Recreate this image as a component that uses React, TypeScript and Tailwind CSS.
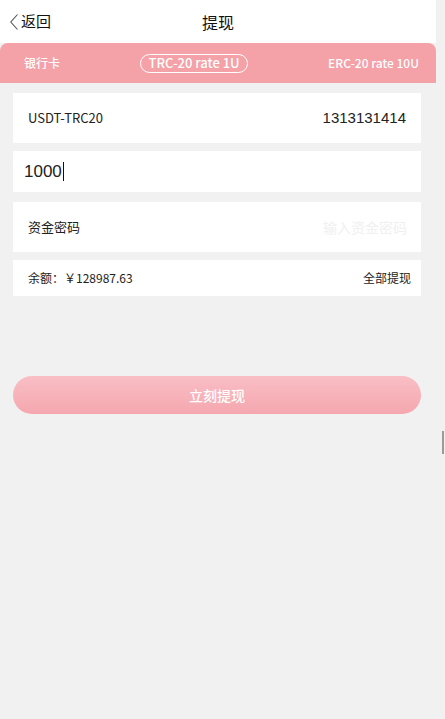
import { useState } from 'react';

const font = "font-['Noto_Sans_CJK_SC','Noto_Sans',sans-serif]";

export default function App() {
  const [tab, setTab] = useState(1);
  const tabs = ['银行卡', 'TRC-20 rate 1U', 'ERC-20 rate 10U'];

  return (
    <div className={`relative min-h-[719px] w-[445px] bg-[#f1f1f2] ${font}`}>
      <div className="w-[436px]">
        {/* header */}
        <div className="relative flex h-[43px] items-center bg-white">
          <button className="flex items-center pl-[9px] text-[15px] text-[#111]">
            <svg width="10" height="18" viewBox="0 0 10 18" fill="none" className="mr-[2px]">
              <path d="M8.5 1.5 1.8 9l6.7 7.5" stroke="#555" strokeWidth="1.1" />
            </svg>
            返回
          </button>
          <h1 className="absolute left-1/2 -translate-x-1/2 text-[16px] text-[#111]">提现</h1>
        </div>

        {/* tabs */}
        <div className="flex h-[40px] items-center justify-between rounded-t-[8px] bg-[#f4a1a8] pl-[17px] pr-[10px] text-[12px] font-medium text-white">
          {tabs.map((t, i) => (
            <button
              key={t}
              onClick={() => setTab(i)}
              className={
                i === tab
                  ? 'flex h-[19px] items-center rounded-full border border-white px-[7px] text-[13px]'
                  : 'px-[7px]'
              }
            >
              {t}
            </button>
          ))}
        </div>

        <div className="flex flex-col pl-[13px] pr-[15px] pt-[10px]">
          <div className="flex h-[50px] items-center justify-between bg-white pl-[15px] pr-[15px]">
            <span className="text-[13px] text-[#222]">USDT-TRC20</span>
            <span className="font-['Liberation_Sans',sans-serif] text-[15px] text-[#222]">1313131414</span>
          </div>

          <div className="mt-[8px] flex h-[41px] items-center bg-white pl-[11px]">
            <span className="font-['Liberation_Sans',sans-serif] text-[17px] text-[#222]">1000</span>
            <span className="ml-[1px] h-[19px] w-px bg-[#111]" />
          </div>

          <div className="mt-[10px] flex h-[50px] items-center justify-between bg-white pl-[15px] pr-[14px]">
            <span className="text-[13px] text-[#222]">资金密码</span>
            <input
              type="password"
              placeholder="输入资金密码"
              className="w-[120px] bg-transparent text-right text-[14px] outline-none placeholder:text-[#f0f0f0]"
            />
          </div>

          <div className="mt-[8px] flex h-[36px] items-center justify-between bg-white pl-[15px] pr-[10px] text-[12px] text-[#222]">
            <span>余额：￥128987.63</span>
            <span>全部提现</span>
          </div>

          <button className="mt-[80px] flex h-[38px] items-center justify-center rounded-full bg-gradient-to-b from-[#f9bec5] to-[#f5a7af] text-[14px] font-medium text-white">
            立刻提现
          </button>
        </div>
      </div>

      {/* scrollbar thumb */}
      <div className="absolute left-[442px] top-[431px] h-[23px] w-[2px] bg-[#9a9a9a]" />
    </div>
  );
}
